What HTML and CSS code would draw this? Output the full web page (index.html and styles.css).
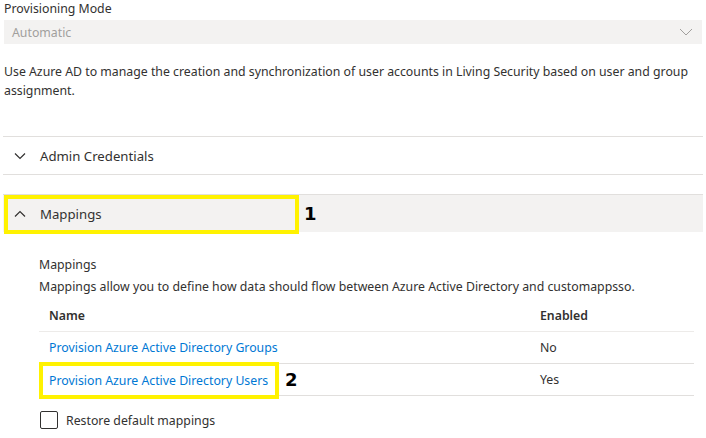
FILE: index.html
```html
<!DOCTYPE html>
<html>
  <head>
    <meta charset="utf-8">
    <title>Provisioning</title>
    <link rel="stylesheet" href="styles.css">
  </head>
  <body>
    <div class="page">
      <div class="field">
        <div class="field-label">Provisioning Mode</div>
        <div class="select">
          <span>Automatic</span>
          <svg class="chev" width="14" height="8" viewBox="0 0 14 8"><path d="M1 1l6 6 6-6" fill="none" stroke="#a19f9d" stroke-width="1"/></svg>
        </div>
      </div>
      <p class="desc">Use Azure AD to manage the creation and synchronization of user accounts in Living Security based on user and group assignment.</p>

      <div class="section">
        <div class="section-head">
          <svg class="chev-small" width="12" height="8" viewBox="0 0 12 8"><path d="M1 1.5l5 5 5-5" fill="none" stroke="#323130" stroke-width="1.2"/></svg>
          <span>Admin Credentials</span>
        </div>
      </div>

      <div class="section open">
        <div class="section-head">
          <div class="mark mark-1">
            <svg class="chev-small" width="12" height="8" viewBox="0 0 12 8"><path d="M1 6.5l5-5 5 5" fill="none" stroke="#323130" stroke-width="1.2"/></svg>
            <span>Mappings</span>
          </div>
          <span class="num">1</span>
        </div>
        <div class="section-body">
          <div class="body-title">Mappings</div>
          <div class="body-desc">Mappings allow you to define how data should flow between Azure Active Directory and customappsso.</div>
          <div class="table">
            <div class="row head">
              <div class="c-name">Name</div>
              <div class="c-enabled">Enabled</div>
            </div>
            <div class="row">
              <div class="c-name"><a href="#">Provision Azure Active Directory Groups</a></div>
              <div class="c-enabled">No</div>
            </div>
            <div class="row">
              <div class="c-name">
                <span class="mark mark-2"><a href="#">Provision Azure Active Directory Users</a></span>
                <span class="num">2</span>
              </div>
              <div class="c-enabled">Yes</div>
            </div>
          </div>
          <label class="check">
            <span class="box"></span>
            <span>Restore default mappings</span>
          </label>
        </div>
      </div>
    </div>
  </body>
</html>
```

FILE: styles.css
```css
* {
  margin: 0;
  padding: 0;
  box-sizing: border-box;
}
html, body {
  background: #fff;
}
body {
  font-family: "Noto Sans", "Open Sans", sans-serif;
  font-size: 12.3px;
  color: #323130;
  width: 706px;
  height: 438px;
  overflow: hidden;
}
a {
  color: #0078d4;
  text-decoration: none;
}
.page {
  padding: 0 3px 0 3px;
}
.field {
  padding-left: 1px;
}
.field-label {
  height: 18px;
  line-height: 18px;
  margin-top: 0;
}
.select {
  height: 24px;
  margin-top: 2px;
  margin-right: 1px;
  background: #f3f2f1;
  display: flex;
  align-items: center;
  justify-content: space-between;
  padding: 0 8px 0 8px;
  color: #a19f9d;
}
.chev {
  margin-right: 1px;
}
.desc {
  padding: 18px 0 0 1px;
  line-height: 19px;
  height: 92px;
}
.section {
  border-top: 1px solid #e1dfdd;
}
.section-head {
  height: 37px;
  display: flex;
  align-items: center;
  padding-left: 11px;
  font-size: 13.2px;
}
.section-head span {
  margin-left: 14px;
}
.chev-small {
  display: block;
}
.section.open {
  margin-top: 19px;
}
.section:not(.open) {
  border-bottom: 1px solid #e1dfdd;
}
.open .section-head {
  background: #f3f2f1;
  padding-left: 1px;
}
.mark {
  border: 4px solid #fff200;
}
.mark-1 {
  width: 295px;
  height: 39px;
  display: flex;
  align-items: center;
  padding-left: 6px;
  margin-top: 1px;
}
.mark-1 span {
  margin-left: 14px;
}
.num {
  font-family: "DejaVu Sans", sans-serif;
  font-weight: bold;
  font-size: 18px;
  color: #000;
}
.section-head .num {
  margin-left: 5px;
}
.section-body {
  padding: 22px 9px 0 36px;
}
.body-title {
  height: 22px;
  line-height: 22px;
}
.body-desc {
  height: 22px;
  line-height: 22px;
}
.table {
  margin-top: 1px;
}
.row {
  display: flex;
  align-items: center;
  height: 32px;
  border-bottom: 1px solid #e1dfdd;
}
.row.head {
  font-weight: 600;
  height: 33px;
  border-bottom-color: #edebe9;
}
.c-name {
  flex: 1;
  padding-left: 10px;
  display: flex;
  align-items: center;
}
.c-enabled {
  width: 154px;
}
.mark-2 {
  display: block;
  white-space: nowrap;
  height: 37px;
  width: 240px;
  margin-left: -10px;
  padding-left: 6px;
  line-height: 29px;
  margin-top: 2px;
}
.row .num {
  margin-left: 6px;
}
.check {
  display: flex;
  align-items: center;
  margin-top: 15px;
  padding-left: 1px;
}
.box {
  width: 18px;
  height: 18px;
  border: 1px solid #323130;
  border-radius: 2px;
  margin-right: 8px;
}
```
